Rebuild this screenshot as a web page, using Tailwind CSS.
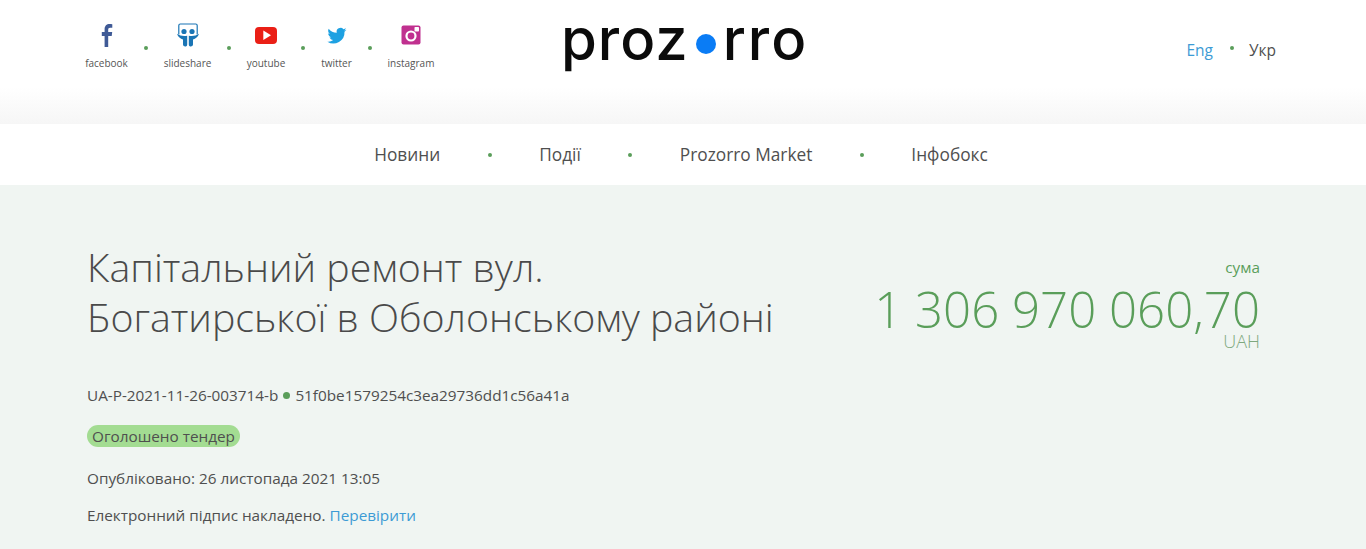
<!DOCTYPE html>
<html lang="uk"><head><meta charset="utf-8"><title>Prozorro</title>
<script src="https://cdn.jsdelivr.net/npm/@tailwindcss/browser@4"></script></head>
<body class="h-[549px] overflow-hidden bg-white font-['Open_Sans',sans-serif] text-[#4f4f4f]">
<header class="relative flex h-[124px] justify-between bg-gradient-to-b from-white from-[70%] to-[#f6f6f6] pl-[85px] pr-[90px]">
  <nav class="flex items-start pt-[22px] text-[10px] leading-[16px] text-[#555]">
    <a class="flex w-[43px] flex-col items-center gap-[7px]">
      <svg class="h-[26px] w-[26px]" viewBox="0 0 26 26"><path fill="#3f5a96" d="M14.200 25V14h3.500l.5-4h-4V7.700c0-1.200.4-2 2-2h2.100V2.300C17.900 2.200 16.800 2 15.600 2c-3 0-5 1.900-5 5.300V10H7.800v4h2.800v11z"/></svg>
      <span>facebook</span></a>
    <i class="mx-[16px] mt-[24px] h-[4px] w-[4px] rounded-full bg-[#5a9e5a]"></i>
    <a class="flex w-[47px] flex-col items-center gap-[7px]">
      <svg class="h-[26px] w-[26px]" viewBox="0 0 26 26"><path fill="none" stroke="#1a75b5" stroke-width="1.200" d="M3.800 12.500V3.500A1.500 1.500 0 0 1 5.300 2h15.400a1.500 1.500 0 0 1 1.500 1.500v9"/><path fill="#1a75b5" d="M2 11.800c3 2.200 6.500 2.500 10.200 2v8.700c0 1.500-1 2-2 2s-2.200-.7-2.200-2v-5c-2.500-.5-5-2.500-6-5.700zM24 11.800c-3 2.200-6.500 2.500-10.200 2v8.700c0 1.500 1 2 2 2s2.200-.7 2.200-2v-5c2.500-.5 5-2.500 6-5.700z"/><circle cx="9" cy="9.500" r="2.600" fill="#1a75b5"/><circle cx="17" cy="9.500" r="2.600" fill="#1a75b5"/></svg>
      <span>slideshare</span></a>
    <i class="mx-[16px] mt-[24px] h-[4px] w-[4px] rounded-full bg-[#5a9e5a]"></i>
    <a class="flex w-[38px] flex-col items-center gap-[7px]">
      <svg class="h-[26px] w-[26px]" viewBox="0 0 26 26"><rect x="2" y="5" width="22" height="17" rx="4" fill="#ea1f16"/><path fill="#fff" d="M10.300 8.500v9.500l7.700-4.700z"/></svg>
      <span>youtube</span></a>
    <i class="mx-[16px] mt-[24px] h-[4px] w-[4px] rounded-full bg-[#5a9e5a]"></i>
    <a class="flex w-[31px] flex-col items-center gap-[7px]">
      <svg class="h-[26px] w-[26px]" viewBox="0 0 26 26"><g transform="translate(2.500 3) scale(.87)"><path fill="#1da1e2" d="M23 5.500c-.8.400-1.700.6-2.600.7.900-.6 1.600-1.400 2-2.500-.9.500-1.900.9-2.900 1.100A4.500 4.500 0 0 0 11.800 9C8 8.800 4.700 7 2.500 4.200c-1.200 2-.6 4.600 1.400 6-.7 0-1.400-.2-2-.6 0 2.200 1.500 4.100 3.600 4.500-.7.200-1.400.2-2 .1.600 1.800 2.300 3.100 4.200 3.100A9 9 0 0 1 1 19.200 12.800 12.800 0 0 0 20.700 7.800c.9-.6 1.700-1.400 2.300-2.300z"/></g></svg>
      <span>twitter</span></a>
    <i class="mx-[16px] mt-[24px] h-[4px] w-[4px] rounded-full bg-[#5a9e5a]"></i>
    <a class="flex w-[46px] flex-col items-center gap-[7px]">
      <svg class="h-[26px] w-[26px]" viewBox="0 0 26 26"><rect x="3.500" y="3.500" width="19" height="19" rx="2" fill="#c0308f"/><rect x="16.500" y="5" width="4.500" height="4.500" rx=".8" fill="#fff"/><circle cx="13" cy="14" r="5.600" fill="#fff"/><circle cx="13" cy="14" r="3.400" fill="#c0308f"/></svg>
      <span>instagram</span></a>
  </nav>
  <a class="absolute left-[561px] top-[4px] flex h-[70px] items-center font-['Inter',sans-serif] text-[58px] font-medium leading-[70px] text-[#0b0b0b]">
    <span class="tracking-[1px]">proz</span><i class="ml-[7px] mr-[7px] mt-[9px] h-[20px] w-[20px] rounded-full bg-[#0a7cf5]"></i><span class="tracking-[2px]">rro</span>
  </a>
  <div class="flex items-center self-start pt-[39px] text-[15.5px] leading-[22px]">
    <a class="text-[#3d9bd5]">Eng</a>
    <i class="ml-[17px] mr-[15px] mb-[4px] h-[4px] w-[4px] rounded-full bg-[#5a9e5a]"></i>
    <a class="text-[#4f4f4f]">Укр</a>
  </div>
</header>
<nav class="flex h-[61px] items-center justify-center bg-white pr-[4px] pt-[1px] text-[17.3px] text-[#4f4f4f]">
  <a>Новини</a><i class="mx-[47.5px] h-[4px] w-[4px] rounded-full bg-[#5a9e5a]"></i>
  <a>Події</a><i class="mx-[47.5px] h-[4px] w-[4px] rounded-full bg-[#5a9e5a]"></i>
  <a>Prozorro Market</a><i class="mx-[47.5px] h-[4px] w-[4px] rounded-full bg-[#5a9e5a]"></i>
  <a>Інфобокс</a>
</nav>
<main class="h-[364px] bg-[#f0f5f2] pl-[87px] pr-[106px] pt-[57px]">
  <div class="flex items-start justify-between">
    <h1 class="text-[39.3px] font-light leading-[50px] text-[#4a4a4a]">Капітальний ремонт вул.<br>Богатирської в Оболонському районі</h1>
    <div class="flex flex-col items-end text-right text-[#5a9e5a]">
      <span class="mt-[14px] text-[15.3px] leading-[23px]">сума</span>
      <span class="text-[49.2px] font-light leading-[60px]">1 306 970 060,70</span>
      <span class="mt-[-9px] text-[18px] font-light leading-[22px] text-[#7ea87e]">UAH</span>
    </div>
  </div>
  <p class="mt-[32px] flex items-center text-[15.3px] leading-[22px]">UA-P-2021-11-26-003714-b<i class="mx-[5px] h-[7px] w-[7px] rounded-full bg-[#5a9e5a]"></i>51f0be1579254c3ea29736dd1c56a41a</p>
  <p class="mt-[19px] w-fit rounded-full bg-[#a3dc92] px-[5px] text-[15.3px] leading-[22px]">Оголошено тендер</p>
  <p class="mt-[20px] text-[15.3px] leading-[22px]">Опубліковано: 26 листопада 2021 13:05</p>
  <p class="mt-[15px] text-[15.3px] leading-[22px]">Електронний підпис накладено. <a class="text-[#3d9bd5]">Перевірити</a></p>
</main>
</body></html>
